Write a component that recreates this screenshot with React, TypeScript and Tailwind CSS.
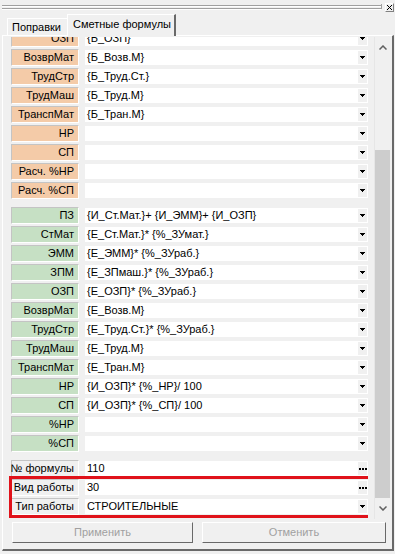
import React from "react";

type Row = { label: string; value: string; btn?: "drop" | "dots" };

const orangeRows: Row[] = [
  { label: "ОЗП", value: "{Б_ОЗП}" },
  { label: "ВозврМат", value: "{Б_Возв.М}" },
  { label: "ТрудСтр", value: "{Б_Труд.Ст.}" },
  { label: "ТрудМаш", value: "{Б_Труд.М}" },
  { label: "ТранспМат", value: "{Б_Тран.М}" },
  { label: "НР", value: "" },
  { label: "СП", value: "" },
  { label: "Расч. %НР", value: "" },
  { label: "Расч. %СП", value: "" },
];

const greenRows: Row[] = [
  { label: "ПЗ", value: "{И_Ст.Мат.}+ {И_ЭММ}+ {И_ОЗП}" },
  { label: "СтМат", value: "{Е_Ст.Мат.}* {%_ЗУмат.}" },
  { label: "ЭММ", value: "{Е_ЭММ}* {%_ЗУраб.}" },
  { label: "ЗПМ", value: "{Е_ЗПмаш.}* {%_ЗУраб.}" },
  { label: "ОЗП", value: "{Е_ОЗП}* {%_ЗУраб.}" },
  { label: "ВозврМат", value: "{Е_Возв.М}" },
  { label: "ТрудСтр", value: "{Е_Труд.Ст.}* {%_ЗУраб.}" },
  { label: "ТрудМаш", value: "{Е_Труд.М}" },
  { label: "ТранспМат", value: "{Е_Тран.М}" },
  { label: "НР", value: "{И_ОЗП}* {%_НР}/ 100" },
  { label: "СП", value: "{И_ОЗП}* {%_СП}/ 100" },
  { label: "%НР", value: "" },
  { label: "%СП", value: "" },
];

const infoRows: Row[] = [
  { label: "№ формулы", value: "110", btn: "dots" },
  { label: "Вид работы", value: "30", btn: "dots" },
  { label: "Тип работы", value: "СТРОИТЕЛЬНЫЕ", btn: "drop" },
];

const DropArrow = () => (
  <svg width="5" height="3" viewBox="0 0 5 3">
    <path d="M0 0h5v1h-1v1h-1v1h-1v-1h-1v-1h-1z" fill="#000" />
  </svg>
);

const Dots = () => (
  <svg width="8" height="2" viewBox="0 0 8 2">
    <rect x="0" y="0" width="2" height="2" fill="#000" />
    <rect x="3" y="0" width="2" height="2" fill="#000" />
    <rect x="6" y="0" width="2" height="2" fill="#000" />
  </svg>
);

const FieldRow = ({ row, tone }: { row: Row; tone: "orange" | "green" | "gray" }) => {
  const bg =
    tone === "orange" ? "bg-[#f4cba8]" : tone === "green" ? "bg-[#c6e0c4]" : "bg-[#f0f0f0]";
  return (
    <div className="flex h-[17px] gap-[6px]">
      <div
        className={`${bg} flex w-[68px] items-center justify-end border-t border-l border-t-[#c4c4c4] border-l-[#c4c4c4] border-b border-r border-b-white border-r-white pr-[4px] leading-none whitespace-nowrap`}
      >
        {row.label}
      </div>
      <div className="my-px flex flex-1 items-center bg-white pl-[2px]">
        <span className="flex-1 leading-none whitespace-nowrap">{row.value}</span>
        <div className="mr-px flex h-[13px] w-[9px] items-center justify-center bg-[#f0f0f0]">
          {row.btn === "dots" ? <Dots /> : <DropArrow />}
        </div>
      </div>
    </div>
  );
};

const App = () => {
  return (
    <div className="relative h-[554px] w-[395px] overflow-hidden bg-[#f0f0f0] font-['Liberation_Sans',Arial,sans-serif] text-[11px] text-black">
      {/* dock grip + close */}
      <div className="flex h-[14px] items-start pl-[2px]">
        <div className="mt-[5px] flex w-[379px] flex-col gap-[1px]">
          <div className="h-[2px] border-t border-t-[#a0a0a0] border-b border-b-white" />
          <div className="h-[2px] border-t border-t-[#a0a0a0] border-b border-b-white" />
        </div>
        <div className="mt-[4px] h-[5px] w-px bg-[#a0a0a0]" />
        <div className="mt-[3px] ml-[3px] flex h-[9px] w-[9px] items-center justify-center border border-t-white border-l-white border-r-[#808080] border-b-[#808080] bg-[#f0f0f0]">
          <svg width="5" height="5" viewBox="0 0 5 5">
            <path d="M0 0L5 5M5 0L0 5" stroke="#000" strokeWidth="1" />
          </svg>
        </div>
      </div>

      {/* tabs */}
      <div className="relative z-10 flex h-[21px] items-end pl-[7px]">
        <div className="flex h-[17px] w-[60px] items-center border-t border-l border-t-white border-l-white pl-[4px] leading-none">
          Поправки
        </div>
        <div className="-mb-px flex h-[22px] w-[109px] items-center border-t border-l border-t-white border-l-white border-r-2 border-r-[#696969] bg-[#f0f0f0] pl-[5px] pb-[2px] leading-none">
          Сметные формулы
        </div>
      </div>

      {/* tab panel */}
      <div className="ml-[2px] flex h-[516px] w-[392px] flex-col border-t border-l border-t-white border-l-white border-r-2 border-b-2 border-r-[#696969] border-b-[#696969]">
        <div className="mt-px flex h-[482px] overflow-hidden">
          <div className="relative flex w-[365px] flex-col gap-[8px] overflow-hidden pl-[8px]">
            <div className="-mt-[7px] flex flex-col gap-[2px]">
              {orangeRows.map((r, i) => (
                <FieldRow key={"o" + i} row={r} tone="orange" />
              ))}
            </div>
            <div className="flex flex-col gap-[2px]">
              {greenRows.map((r, i) => (
                <FieldRow key={"g" + i} row={r} tone="green" />
              ))}
            </div>
            <div className="flex flex-col gap-[2px]">
              {infoRows.map((r, i) => (
                <FieldRow key={"i" + i} row={r} tone="gray" />
              ))}
            </div>
            {/* red highlight around last two rows */}
            <div className="pointer-events-none absolute top-[439px] left-[6px] h-[42px] w-[365px] border-[3px] border-[#e0121a]" />
          </div>
          {/* scrollbar */}
          <div className="ml-[6px] flex w-[17px] flex-col border-l border-l-[#e6e6e6] bg-[#f0f0f0]">
            <div className="flex h-[20px] items-center justify-center">
              <svg width="8" height="5" viewBox="0 0 8 5">
                <path d="M0.5 4.5L4 1L7.5 4.5" fill="none" stroke="#606060" strokeWidth="1.5" />
              </svg>
            </div>
            <div className="h-[93px]" />
            <div className="h-[348px] w-[15px] bg-[#cdcdcd]" />
            <div className="flex flex-1 items-center justify-center">
              <svg width="8" height="5" viewBox="0 0 8 5">
                <path d="M0.5 0.5L4 4L7.5 0.5" fill="none" stroke="#606060" strokeWidth="1.5" />
              </svg>
            </div>
          </div>
        </div>

        {/* buttons */}
        <div className="mt-[3px] flex gap-[9px] pl-[9px]">
          <button className="flex h-[21px] w-[181px] items-center justify-center border border-t-white border-l-white border-r-[#696969] border-b-[#696969] bg-[#f0f0f0] text-[#a0a0a0] leading-none">
            Применить
          </button>
          <button className="flex h-[21px] w-[184px] items-center justify-center border border-t-white border-l-white border-r-[#696969] border-b-[#696969] bg-[#f0f0f0] text-[#a0a0a0] leading-none">
            Отменить
          </button>
        </div>
      </div>
    </div>
  );
};

export default App;
